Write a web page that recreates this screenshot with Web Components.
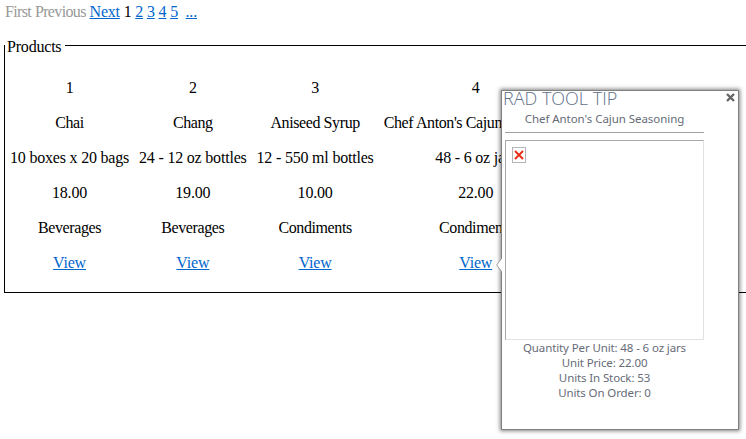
<!DOCTYPE html>
<html>
<head>
<meta charset="utf-8">
<title>Products</title>
<style>
  html, body { margin: 0; height: 100%; overflow: hidden; background: #fff; }
  body { font: 16px/18px "Liberation Serif", "Times New Roman", serif; letter-spacing: -0.2px; color: #000; }
</style>
</head>
<body>
<product-pager></product-pager>
<product-list></product-list>
<rad-tool-tip heading="RAD TOOL TIP" name="Chef Anton's Cajun Seasoning">
  <div>Quantity Per Unit: 48 - 6 oz jars</div>
  <div>Unit Price: 22.00</div>
  <div>Units In Stock: 53</div>
  <div>Units On Order: 0</div>
</rad-tool-tip>

<script>
const PRODUCTS = [
  { id: 1, name: 'Chai', qty: '10 boxes x 20 bags', price: '18.00', category: 'Beverages' },
  { id: 2, name: 'Chang', qty: '24 - 12 oz bottles', price: '19.00', category: 'Beverages' },
  { id: 3, name: 'Aniseed Syrup', qty: '12 - 550 ml bottles', price: '10.00', category: 'Condiments' },
  { id: 4, name: "Chef Anton's Cajun Seasoning", qty: '48 - 6 oz jars', price: '22.00', category: 'Condiments' }
];

class ProductPager extends HTMLElement {
  constructor() {
    super();
    this.attachShadow({ mode: 'open' });
  }

  connectedCallback() {
    const pages = [2, 3, 4, 5].map(p => `<a href="#">${p}</a>`).join(' ');
    this.shadowRoot.innerHTML = `
      <style>
        :host { display: block; padding: 3px 0 0 5px; height: 21px; }
        nav { white-space: pre; }
        a { color: #0066cc; }
        .off { color: #999; letter-spacing: -0.65px; }
      </style>
      <nav><span class="off">First</span> <span class="off">Previous</span> <a href="#">Next</a> 1 ${pages}  <a href="#">...</a></nav>`;
  }
}

class ProductList extends HTMLElement {
  constructor() {
    super();
    this.attachShadow({ mode: 'open' });
  }

  connectedCallback() {
    const cells = PRODUCTS.map(p => `
      <div class="col">
        <span>${p.id}</span>
        <span class="tight">${p.name}</span>
        <span>${p.qty}</span>
        <span>${p.price}</span>
        <span class="tight">${p.category}</span>
        <span><a href="#">View</a></span>
      </div>`).join('');
    this.shadowRoot.innerHTML = `
      <style>
        :host { display: block; margin: 10px -10px 0 4px; }
        fieldset { margin: 0; padding: 0 0 12px 5px; border: 1px solid #000; min-width: 0; }
        legend { padding: 4px 4px 0 2px; margin-left: -5px; }
        .grid { display: flex; gap: 10px; padding-top: 14px; }
        .col { display: grid; grid-auto-rows: 35px; justify-items: center; align-items: center; white-space: nowrap; }
        .tight { letter-spacing: -0.4px; }
        a { color: #0066cc; }
      </style>
      <fieldset>
        <legend>Products</legend>
        <div class="grid">${cells}</div>
      </fieldset>`;
  }
}

class RadToolTip extends HTMLElement {
  constructor() {
    super();
    this.attachShadow({ mode: 'open' });
  }

  connectedCallback() {
    this.shadowRoot.innerHTML = `
      <style>
        :host {
          position: absolute; left: 501px; top: 90px;
          width: 236px; height: 338px;
          background: #fff;
          border: 1px solid #808080;
          box-shadow: 0 0 4px 1px rgba(0,0,0,0.5);
          font: 11.5px/15px "Noto Sans", "Open Sans", sans-serif;
          letter-spacing: -0.12px;
          color: #666b78;
          display: block;
        }
        .head { display: flex; justify-content: space-between; padding: 0 2px 0 1px; height: 20px; }
        .title { font: 300 18px/14px "Open Sans", sans-serif; letter-spacing: 0; color: #5f7088; white-space: nowrap; }
        .close { width: 9px; height: 9px; margin: 2px 1px 0 0; }
        .body { width: 199px; margin-left: 3px; display: flex; flex-direction: column; }
        .name { text-align: center; height: 21px; line-height: 16px; letter-spacing: -0.05px; border-bottom: 1px solid #a0a0a0; }
        .pic {
          box-sizing: border-box; height: 200px; margin-top: 7px; padding: 6px;
          border: 1px solid; border-color: #a8a8a8 #e2e2e2 #e2e2e2 #a8a8a8;
        }
        .broken { width: 14px; height: 16px; display: block; }
        .info { text-align: center; white-space: nowrap; }
        .arrow { position: absolute; left: -6px; top: 167px; width: 6px; height: 14px; }
      </style>
      <svg class="arrow" viewBox="0 0 6 14"><path d="M6 0 .7 7 6 14" fill="#fff" stroke="#999"/></svg>
      <div class="head">
        <span class="title">${this.getAttribute('heading')}</span>
        <svg class="close" viewBox="0 0 9 9"><path d="M1 1l7 7M8 1 1 8" stroke="#666" stroke-width="2.4"/></svg>
      </div>
      <div class="body">
        <div class="name">${this.getAttribute('name')}</div>
        <div class="pic">
          <svg class="broken" viewBox="0 0 14 16">
            <rect x=".5" y=".5" width="13" height="15" fill="#fff" stroke="#b4b4b4"/>
            <path d="M3 4l8 8M11 4l-8 8" stroke="#e8301a" stroke-width="2"/>
          </svg>
        </div>
        <div class="info"><slot></slot></div>
      </div>`;
  }
}

customElements.define('product-pager', ProductPager);
customElements.define('product-list', ProductList);
customElements.define('rad-tool-tip', RadToolTip);
</script>
</body>
</html>
